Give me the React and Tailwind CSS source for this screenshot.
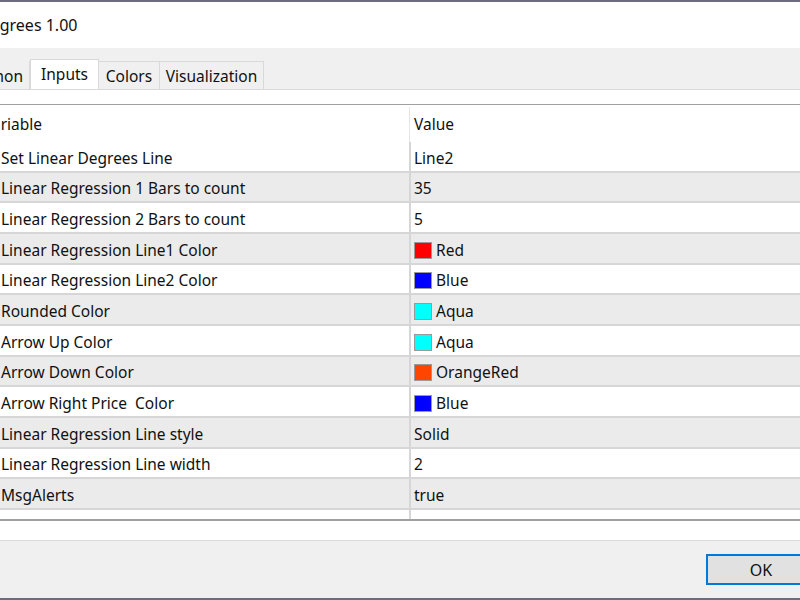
import React from 'react';

const rows = [
  { name: 'Set Linear Degrees Line', value: 'Line2' },
  { name: 'Linear Regression 1 Bars to count', value: '35' },
  { name: 'Linear Regression 2 Bars to count', value: '5' },
  { name: 'Linear Regression Line1 Color', value: 'Red', color: 'bg-[#ff0000]' },
  { name: 'Linear Regression Line2 Color', value: 'Blue', color: 'bg-[#0000ff]' },
  { name: 'Rounded Color', value: 'Aqua', color: 'bg-[#00ffff]' },
  { name: 'Arrow Up Color', value: 'Aqua', color: 'bg-[#00ffff]' },
  { name: 'Arrow Down Color', value: 'OrangeRed', color: 'bg-[#ff4500]' },
  { name: 'Arrow Right Price  Color', value: 'Blue', color: 'bg-[#0000ff]' },
  { name: 'Linear Regression Line style', value: 'Solid' },
  { name: 'Linear Regression Line width', value: '2' },
  { name: 'MsgAlerts', value: 'true' },
];

const Row = ({ row, index }) => (
  <div
    className={`flex h-[30.67px] border-b-2 border-[#d6d6d6] ${
      index % 2 === 1 ? 'bg-[#ebebeb]' : 'bg-white'
    }`}
  >
    <div className="w-[409px] flex items-center pl-[1px] pt-[4px] whitespace-pre">{row.name}</div>
    <div className="w-[2px] bg-[#d6d6d6]" />
    <div className="flex-1 flex items-center pl-[3px] pt-[4px] whitespace-pre">
      {row.color && (
        <span className={`w-[18px] h-[17px] border border-[#9a9a9a] mr-[4px] ${row.color}`} />
      )}
      <span>{row.value}</span>
    </div>
  </div>
);

export default function App() {
  return (
    <div
      className="w-[800px] h-[600px] overflow-hidden flex flex-col bg-white text-[15.5px] text-[#111]"
      style={{ fontFamily: '"Noto Sans", "Open Sans", sans-serif' }}
    >
      {/* window frame top */}
      <div className="h-[2px] bg-[#6c6c7e]" />

      {/* Title */}
      <div className="h-[46px] flex items-center overflow-hidden">
        <span className="-ml-[21px] text-[16px] whitespace-pre">Degrees 1.00</span>
      </div>

      {/* Tabs */}
      <div className="h-[42px] bg-[#f0f0f0] flex items-end overflow-hidden border-b border-[#d9d9d9]">
        <div className="h-[28px] w-[30px] flex items-center justify-end pr-[6px] pt-[3px] border-r border-[#d9d9d9] overflow-hidden">
          <span className="whitespace-pre">Common</span>
        </div>
        <div className="h-[31px] w-[69px] bg-white border-x border-t border-[#d9d9d9] -mb-[1px] flex items-start pt-[3px] justify-center">
          Inputs
        </div>
        <div className="h-[28px] w-[61px] flex items-center justify-center pt-[3px] border-r border-t border-[#d9d9d9]">
          Colors
        </div>
        <div className="h-[28px] w-[104px] flex items-center justify-center pt-[3px] border-r border-t border-[#d9d9d9]">
          Visualization
        </div>
      </div>

      {/* Content */}
      <div className="h-[14px] bg-white" />
      <div className="border-t border-b-2 border-[#a0a0a0] h-[417px] flex flex-col overflow-hidden">
        <div className="flex h-[37px] bg-white">
          <div className="w-[409px] flex items-center pt-[3px] overflow-hidden">
            <span className="-ml-[17px] whitespace-pre">Variable</span>
          </div>
          <div className="w-[1px] bg-[#e5e5e5] mt-[2px]" />
          <div className="flex-1 flex items-center pt-[3px] pl-[4px]">Value</div>
        </div>
        {rows.map((row, i) => (
          <Row key={i} row={row} index={i} />
        ))}
        <div className="flex flex-1 bg-white">
          <div className="w-[409px]" />
          <div className="w-[2px] bg-[#d6d6d6]" />
        </div>
      </div>
      <div className="h-[20px] bg-white border-b border-[#dcdcdc]" />

      {/* Footer */}
      <div className="flex-1 bg-[#f0f0f0] flex items-start pt-[13px] pl-[706px]">
        <button className="w-[110px] h-[31px] shrink-0 bg-[#e1e1e1] border-2 border-[#0078d7] flex items-center justify-center text-[16px]">
          OK
        </button>
      </div>
      <div className="h-[2px] bg-[#6c6c7e]" />
    </div>
  );
}
